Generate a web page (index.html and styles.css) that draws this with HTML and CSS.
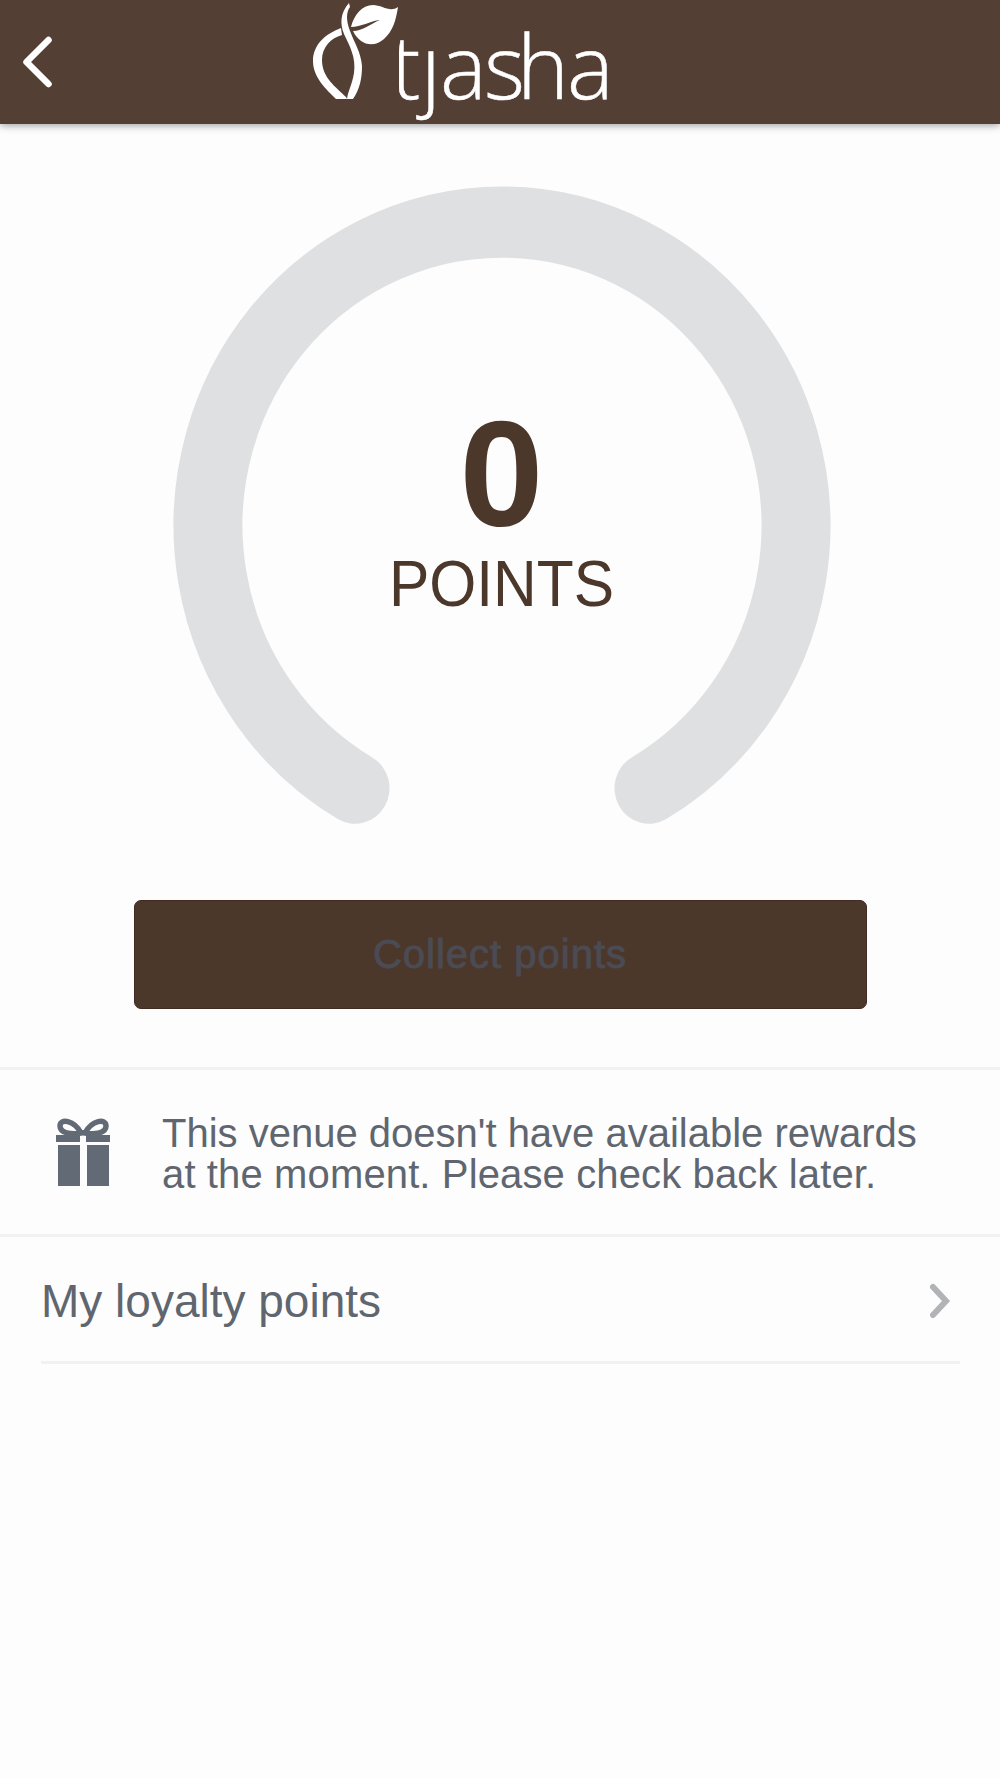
FILE: index.html
```html
<!DOCTYPE html>
<html lang="en">
<head>
<meta charset="utf-8">
<title>Tjasha loyalty points</title>
<link rel="stylesheet" href="styles.css">
</head>
<body>
<header class="topbar">
  <svg class="back" viewBox="0 0 32 56" role="img" aria-label="Back"><path d="M26.5 6 L4.5 28 L26.5 50"/></svg>
  <svg class="logo" viewBox="0 0 320 124" role="img" aria-label="tjasha">
    <defs><clipPath id="wordmark"><path d="M99 0H120V50H139V0H320V124H99Z"/></clipPath></defs>
    <path d="M49 3C40 13 40 24 44 34C50 47 56 57 54 73C52 85 48 91 47 99L53 99C60 89 62 78 62 66C61 52 54 42 50 31C46 21 46 12 50 7Z"/>
    <path d="M41 28C25 34 13 45 13 61C13 78 27 90 36 99L47 99L46 97C36 87 22 78 22 60C22 47 31 38 42 35Z"/>
    <path d="M51 27C54 15 62 5 73 5C82 5 90 13 98 7C96 20 93 31 84 39C73 49 59 44 53 31C63 31 70 24 80 20C70 21 61 27 51 27Z"/>
    <text class="wordmark" x="91 121 140 184 217 267" y="99" clip-path="url(#wordmark)">tjasha</text>
  </svg>
</header>
<main>
  <section class="meter">
    <svg class="ring" viewBox="0 0 658 658" preserveAspectRatio="none"><path d="M182 583.6A294 294 0 1 1 476 583.6"/></svg>
    <div class="score"><strong>0</strong><span>POINTS</span></div>
  </section>
  <button class="collect">Collect points</button>
  <section class="notice">
    <svg class="gift" viewBox="0 0 56 70">
      <path d="M1 18H25V25H1ZM31 18H55V25H31ZM3 28H25V69H3ZM32 28H54V69H32ZM23 13H33V18H23Z"/>
      <path class="bow" d="M26 16C19 3 5 1 5 9C5 16 16 18 26 16ZM30 16C37 3 51 1 51 9C51 16 40 18 30 16Z"/>
    </svg>
    <p><span class="first">This venue doesn't have available rewards</span><br><span class="second">at the moment. Please check back later.</span></p>
  </section>
  <a class="row"><span>My loyalty points</span><svg class="chevron" viewBox="0 0 22 36"><path d="M4 4L17 18L4 32"/></svg></a>
</main>
</body>
</html>
```
FILE: styles.css
```css
* { box-sizing: border-box; }
body {
  margin: 0;
  min-height: 1778px;
  background: #fdfdfd;
  color: #60666f;
  font-family: "Liberation Sans", Arial, sans-serif;
}
.topbar {
  display: flex;
  align-items: center;
  height: 124px;
  padding-left: 22px;
  background: #543f34;
  box-shadow: 0 1px 8px rgba(0, 0, 0, .42);
}
.back { width: 32px; height: 56px; }
.back path { fill: none; stroke: #fff; stroke-width: 6.5; stroke-linecap: round; stroke-linejoin: round; }
.logo { width: 320px; height: 124px; margin-left: 246px; fill: #fff; }
.wordmark { font: 300 88px "Open Sans", sans-serif; stroke: #fff; stroke-width: .5; }
main { display: flex; flex-direction: column; }
.meter { display: grid; justify-items: center; height: 776px; padding: 62px 0 0 3px; }
.ring { grid-area: 1 / 1; width: 658px; height: 679px; }
.ring path { fill: none; stroke: #dfe0e2; stroke-width: 69; stroke-linecap: round; }
.score {
  grid-area: 1 / 1;
  display: flex;
  flex-direction: column;
  align-items: center;
  padding-top: 223px;
  color: #4c372b;
}
.score strong { font-size: 145px; line-height: 133px; transform: scale(1.04, 1.03); }
.score span { font-size: 60.5px; line-height: 70px; margin-top: 7px; transform: scaleY(1.06); }
.collect {
  align-self: center;
  width: 733px;
  height: 109px;
  padding: 0;
  border: 1px solid #412b22;
  border-radius: 7px;
  background: #4c372b;
  color: #4b4b53;
  -webkit-text-stroke: .9px #4b4b53;
  font: 40px "Liberation Sans", Arial, sans-serif;
  letter-spacing: 1px;
}
.notice {
  display: flex;
  height: 170px;
  margin-top: 58px;
  padding: 46px 0 0 55px;
  border-top: 3px solid #f1f1f2;
  border-bottom: 3px solid #f1f1f2;
}
.gift { width: 56px; height: 70px; margin-top: 1px; fill: #626b75; }
.gift .bow { fill: none; stroke: #626b75; stroke-width: 5.5; }
.notice p { margin: -3px 0 0 51px; font-size: 40px; line-height: 41px; white-space: nowrap; }
.second { letter-spacing: .13px; }
.row {
  display: flex;
  align-items: center;
  justify-content: space-between;
  height: 127px;
  margin: 0 40px 0 41px;
  padding: 3px 9px 0 0;
  border-bottom: 3px solid #f1f1f2;
  font-size: 46px;
}
.chevron { width: 22px; height: 36px; }
.chevron path { fill: none; stroke: #b2b3b7; stroke-width: 6; stroke-linecap: round; }
```
